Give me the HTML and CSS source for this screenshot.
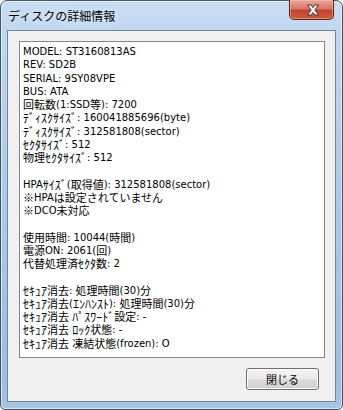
FILE: index.html
```html
<html>
<head>
<meta charset="utf-8">
<link rel="stylesheet" href="styles.css">
</head>
<body>

<div class="window">
  <div class="titlebar">
    <span class="title">ディスクの詳細情報</span>
    <div class="close-btn">
      <svg width="14" height="12" viewBox="0 0 14 12">
        <path d="M1.5 1 H5 L7 3.6 L9 1 H12.5 L8.8 6 L12.5 11 H9 L7 8.4 L5 11 H1.5 L5.2 6 Z"
              fill="#ffffff" stroke="#3c3535" stroke-width="1" stroke-linejoin="round"/>
      </svg>
    </div>
  </div>

  <div class="client">
    <div class="info">
      <div>MODEL: ST3160813AS</div>
      <div>REV: SD2B</div>
      <div>SERIAL: 9SY08VPE</div>
      <div>BUS: ATA</div>
      <div><span class="ja">回転数</span>(1:SSD<span class="ja">等</span>): 7200</div>
      <div><span class="hw">ﾃﾞｨｽｸｻｲｽﾞ</span>: 160041885696(byte)</div>
      <div><span class="hw">ﾃﾞｨｽｸｻｲｽﾞ</span>: 312581808(sector)</div>
      <div><span class="hw">ｾｸﾀｻｲｽﾞ</span>: 512</div>
      <div><span class="ja">物理</span><span class="hw">ｾｸﾀｻｲｽﾞ</span>: 512</div>
      <div class="blank"></div>
      <div>HPA<span class="hw">ｻｲｽﾞ</span>(<span class="ja">取得値</span>): 312581808(sector)</div>
      <div><span class="ja">※</span>HPA<span class="ja">は設定されていません</span></div>
      <div><span class="ja">※</span>DCO<span class="ja">未対応</span></div>
      <div class="blank"></div>
      <div><span class="ja">使用時間</span>: 10044(<span class="ja">時間</span>)</div>
      <div><span class="ja">電源</span>ON: 2061(<span class="ja">回</span>)</div>
      <div><span class="ja">代替処理済</span><span class="hw">ｾｸﾀ</span><span class="ja">数</span>: 2</div>
      <div class="blank"></div>
      <div><span class="hw">ｾｷｭｱ</span><span class="ja">消去</span>: <span class="ja">処理時間</span>(30)<span class="ja">分</span></div>
      <div><span class="hw">ｾｷｭｱ</span><span class="ja">消去</span>(<span class="hw">ｴﾝﾊﾝｽﾄ</span>): <span class="ja">処理時間</span>(30)<span class="ja">分</span></div>
      <div><span class="hw">ｾｷｭｱ</span><span class="ja">消去</span> <span class="hw">ﾊﾟｽﾜｰﾄﾞ</span><span class="ja">設定</span>: -</div>
      <div><span class="hw">ｾｷｭｱ</span><span class="ja">消去</span> <span class="hw">ﾛｯｸ</span><span class="ja">状態</span>: -</div>
      <div><span class="hw">ｾｷｭｱ</span><span class="ja">消去</span> <span class="ja">凍結状態</span>(frozen): O</div>
    </div>
    <div class="buttons">
      <button class="btn">閉じる</button>
    </div>
  </div>
</div>

</body>
</html>
```

FILE: styles.css
```css
body {
  margin: 0;
  width: 343px;
  height: 410px;
  overflow: hidden;
  background: #ffffff;
}

.window {
  box-sizing: border-box;
  width: 343px;
  height: 410px;
  border: 1px solid #42556b;
  border-radius: 7px 7px 5px 5px;
  background: linear-gradient(to bottom, #c8ddf2 0px, #bfd6ef 40px, #adc9e7 200px, #9fbedd 380px, #a9c6e3 410px);
  box-shadow: inset 0 0 0 1px rgba(255, 255, 255, 0.55);
  padding: 0 6px 7px 6px;
  display: flex;
  flex-direction: column;
}

.titlebar {
  height: 29px;
  display: flex;
  justify-content: space-between;
  align-items: flex-start;
  padding: 0 2px 0 1px;
}

.title {
  font-family: "Noto Sans CJK JP", sans-serif;
  font-size: 12px;
  color: #000000;
  margin-top: 6px;
  text-shadow: 0 0 6px rgba(255, 255, 255, 0.9);
}

.close-btn {
  box-sizing: border-box;
  width: 45px;
  height: 20px;
  margin-top: -1px;
  border: 1px solid #5a2a22;
  border-top: none;
  border-radius: 0 0 5px 5px;
  background: linear-gradient(to bottom, #e9a999 0%, #d77764 45%, #c2432f 55%, #cf5a3e 100%);
  box-shadow: inset 0 0 0 1px rgba(255, 200, 190, 0.45);
  display: flex;
  align-items: center;
  justify-content: center;
  padding-left: 2px;
}

.client {
  flex: 1;
  background: #f0f0f0;
  border: 1px solid #70849a;
  padding: 10px 10px 11px 11px;
  display: flex;
  flex-direction: column;
}

.info {
  flex: 1;
  background: #ffffff;
  border: 1px solid #828790;
  padding: 3px 3px;
  font-family: "DejaVu Sans", "Noto Sans CJK JP", sans-serif;
  font-size: 10px;
  color: #000000;
  white-space: nowrap;
  overflow: hidden;
}

.info div {
  height: 13.25px;
  line-height: 13px;
}

.ja,
.hw {
  display: inline-block;
  height: 13px;
  line-height: 13px;
  vertical-align: top;
  font-family: "Noto Sans CJK JP", sans-serif;
  font-size: 11px;
}

.hw {
  font-size: 12px;
}

.buttons {
  display: flex;
  justify-content: flex-end;
  padding: 10px 6px 0 0;
}

.btn {
  box-sizing: border-box;
  width: 73px;
  height: 22px;
  border: 1px solid #707070;
  border-radius: 3px;
  background: linear-gradient(to bottom, #f2f2f2 0%, #ebebeb 50%, #dddddd 51%, #cfcfcf 100%);
  box-shadow: inset 0 0 0 1px #fcfcfc;
  font-family: "Noto Sans CJK JP", sans-serif;
  font-size: 11px;
  color: #000000;
  padding: 0;
}
```
